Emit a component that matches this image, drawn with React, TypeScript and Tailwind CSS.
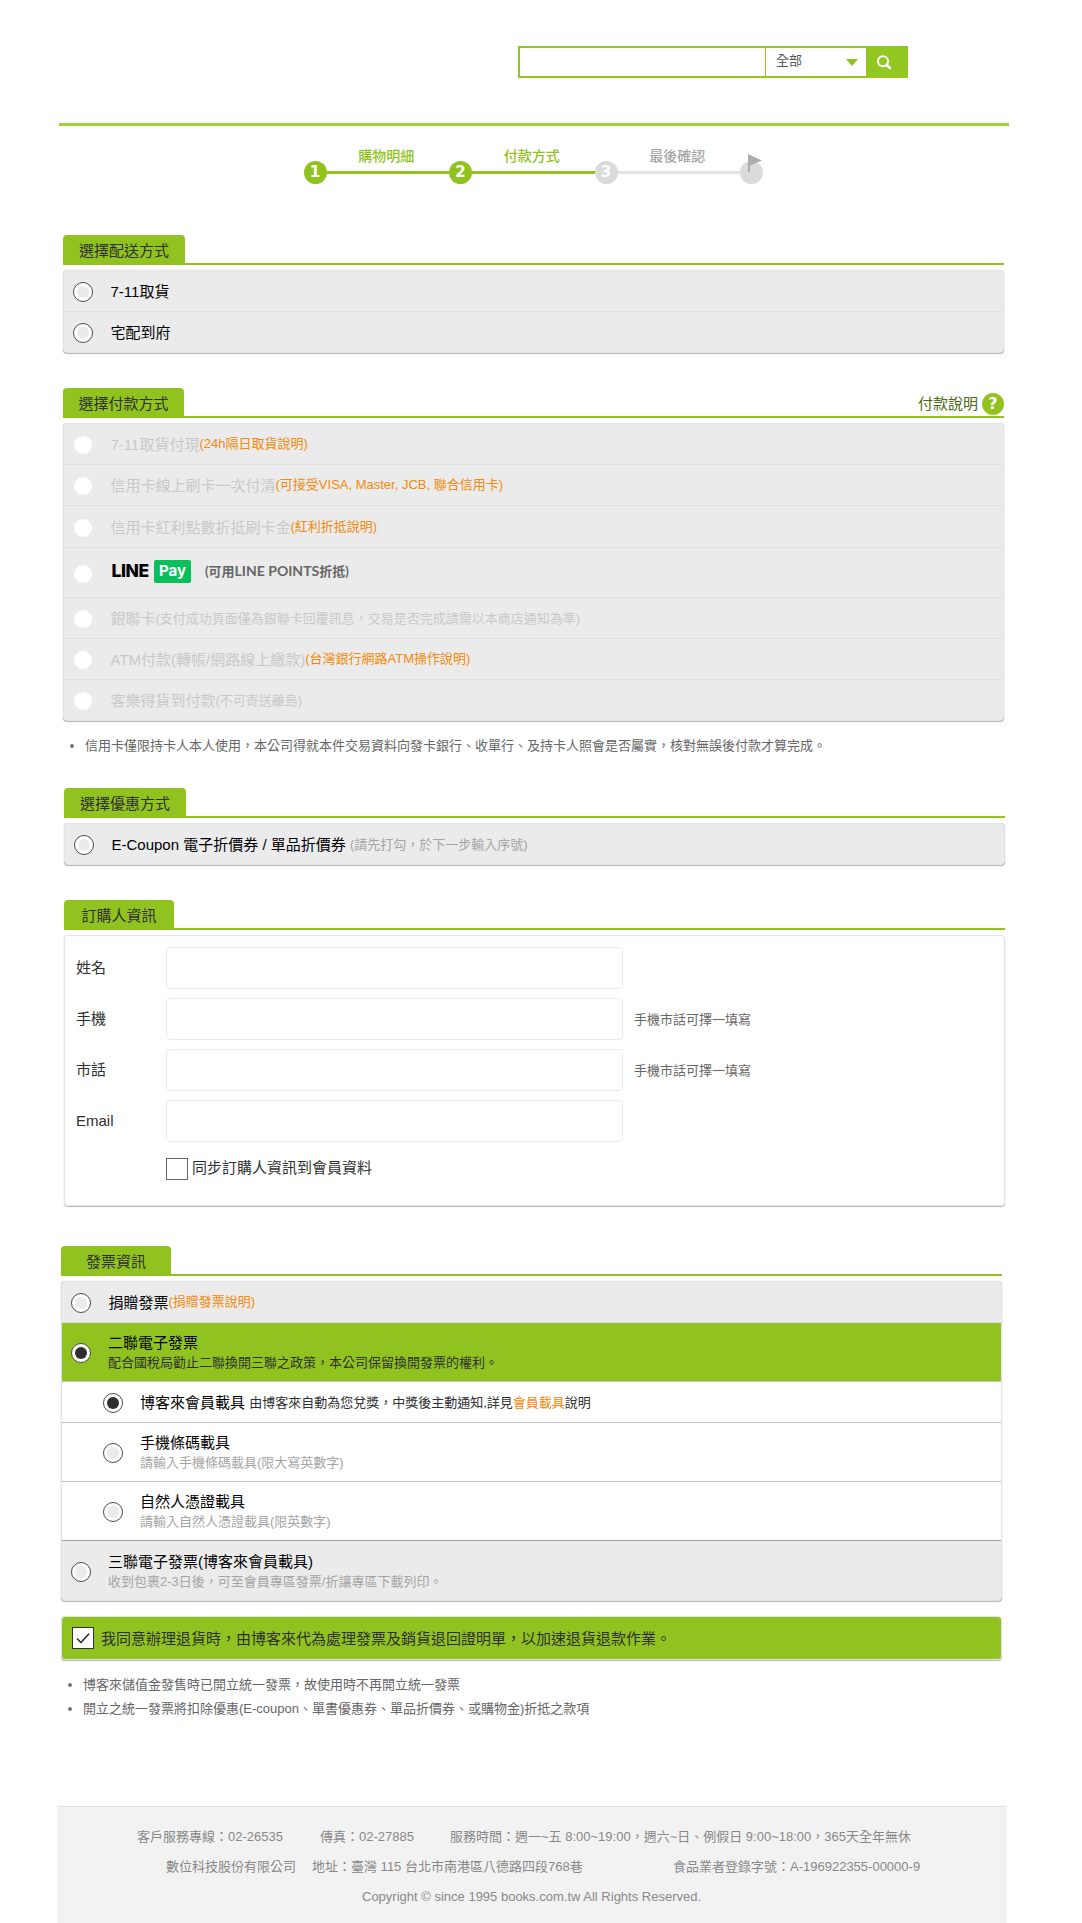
import type { ReactNode } from "react";

const cx = (...parts: (string | false | undefined)[]) => parts.filter(Boolean).join(" ");

function Radio({ state = "off" }: { state?: "off" | "on" | "disabled" }) {
  if (state === "disabled") {
    return <span className="mx-px block size-[18px] shrink-0 rounded-full bg-white" />;
  }
  return (
    <span className="flex size-5 shrink-0 items-center justify-center rounded-full border border-[#4a4a4a] bg-white">
      <span className={cx("block size-3 rounded-full", state === "on" ? "bg-[#2f2f2f]" : "bg-[#ebebeb]")} />
    </span>
  );
}

function TabHeading({ tab, children, aside }: { tab: string; children: ReactNode; aside?: ReactNode }) {
  return (
    <div className="flex h-[30px] items-start justify-between border-b-2 border-[#91c320]">
      <h2
        className={cx(
          "flex h-7 items-center justify-center rounded-t bg-[#91c320] pt-[3px] text-[15px] leading-5 text-[#2f2f2f]",
          tab,
        )}
      >
        {children}
      </h2>
      {aside}
    </div>
  );
}

function Panel({ className, children }: { className?: string; children: ReactNode }) {
  return (
    <div
      className={cx(
        "mt-[5px] overflow-hidden rounded border border-[#e4e4e4] shadow-[0_1px_1px_rgba(0,0,0,0.28),0_0_1px_rgba(0,0,0,0.2)]",
        className,
      )}
    >
      {children}
    </div>
  );
}

function Row({
  className = "h-[41px]",
  state,
  children,
  last,
}: {
  className?: string;
  state?: "off" | "on" | "disabled";
  children: ReactNode;
  last?: boolean;
}) {
  return (
    <div
      className={cx(
        "flex items-center pt-0.5 pl-[9px] text-[15px] leading-5",
        !last && "border-b border-[#e0e0e0]",
        className,
      )}
    >
      <Radio state={state} />
      <div className="ml-[17.5px] flex items-center whitespace-pre">{children}</div>
    </div>
  );
}

function Hint({ children }: { children: ReactNode }) {
  return <span className="relative -top-px text-[13px] text-[#f28a0a]">{children}</span>;
}

function InvoiceRow({
  className,
  state,
  title,
  note,
  noteColor = "text-[#a5a5a5]",
}: {
  className: string;
  state: "off" | "on";
  title: string;
  note: string;
  noteColor?: string;
}) {
  return (
    <div className={cx("flex items-center pt-0.5", className)}>
      <Radio state={state} />
      <div className="ml-[17px]">
        <div className="text-[15px] leading-5 text-black">{title}</div>
        <div className={cx("text-[13px] leading-5", noteColor)}>{note}</div>
      </div>
    </div>
  );
}

function Field({ label, note }: { label: string; note?: string }) {
  return (
    <div className="flex h-[42px] items-center">
      <label className="w-[91px] pt-px pl-px text-[15px] text-[#2f2f2f]">{label}</label>
      <input className="h-[42px] w-[457px] rounded border border-[#ebebeb] bg-white" />
      {note && <span className="ml-[11px] pt-0.5 text-[13px] text-[#666]">{note}</span>}
    </div>
  );
}

function Bullets({ items, className }: { items: string[]; className: string }) {
  return (
    <ul className={cx("text-[13px] leading-6 text-[#666]", className)}>
      {items.map((item) => (
        <li key={item} className="flex items-center whitespace-nowrap">
          <span className="mr-[11px] block size-1 rounded-full bg-[#777]" />
          {item}
        </li>
      ))}
    </ul>
  );
}

function Step({ label, done, n }: { label?: string; done?: boolean; n?: string }) {
  return (
    <>
      <div
        className={cx(
          "relative flex size-[23px] shrink-0 items-center justify-center rounded-full font-['DejaVu_Sans'] text-[15px] font-bold text-white",
          done ? "bg-[#91c320]" : "bg-[#dbdbdb]",
        )}
      >
        {n}
        {!n && (
          <svg className="absolute -top-[7px] left-2 h-[18px] w-[14px]" viewBox="0 0 14 18">
            <path d="M0 0L14 6.5L2 11.5V18H0Z" fill="#adadad" />
          </svg>
        )}
      </div>
      {label && (
        <div className="relative flex w-[122.5px] items-center">
          <div className={cx("h-[3px] w-full", done ? "bg-[#91c320]" : "bg-[#e4e4e4]")} />
          <span
            className={cx(
              "absolute -top-[15px] -left-[1.5px] w-full text-center text-[14px] leading-5 font-medium",
              done ? "text-[#91c320]" : "text-[#a5a5a5]",
            )}
          >
            {label}
          </span>
        </div>
      )}
    </>
  );
}

export default function App() {
  return (
    <div className="flex h-[1923px] w-[1082px] flex-col overflow-hidden bg-white font-['Liberation_Sans','Noto_Sans_CJK_TC',sans-serif] text-[#2f2f2f]">
      <header className="mr-[73px] ml-[59px] h-[126px] shrink-0 border-b-[3px] border-[#9bd42f] pt-[46px] pl-[459px]">
        <div className="flex h-8 w-[390px] border-2 border-[#93c722] bg-[#93c722]">
          <input className="w-[245px] bg-white" />
          <div className="ml-px flex w-[100px] items-center justify-between bg-white pr-2 pl-[10px] text-[13px] text-[#555]">
            <span className="relative -top-px">全部</span>
            <svg className="h-[7px] w-3" viewBox="0 0 12 7">
              <path d="M0 0H12L6 7Z" fill="#91c320" />
            </svg>
          </div>
          <button className="flex flex-1 items-center pl-[10px]" aria-label="搜尋">
            <svg className="h-4 w-4" viewBox="0 0 16 16" fill="none" stroke="white">
              <circle cx="7" cy="7.2" r="5" strokeWidth="2" />
              <path d="M10.8 11L14 14" strokeWidth="2.6" strokeLinecap="round" />
            </svg>
          </button>
        </div>
      </header>

      <div className="mt-[35px] ml-[303.5px] flex h-[23px] shrink-0">
        <Step n="1" label="購物明細" done />
        <Step n="2" label="付款方式" done />
        <Step n="3" label="最後確認" />
        <Step />
      </div>

      <section className="mt-[51px] ml-[63px] w-[941px]">
        <TabHeading tab="w-[122px]">選擇配送方式</TabHeading>
        <Panel className="bg-[#ebebeb] text-black">
          <Row>7-11取貨</Row>
          <Row className="h-10" last>
            宅配到府
          </Row>
        </Panel>
      </section>

      <section className="mt-[35px] ml-[63px] w-[941px]">
        <TabHeading
          tab="w-[121px]"
          aside={
            <a className="mt-[5px] flex items-center text-[15px] leading-5 text-[#4c6a10]">
              付款說明
              <span className="ml-1 flex size-[22px] items-center justify-center rounded-full bg-[#91c320] font-['DejaVu_Sans'] text-[16px] font-bold text-white">
                ?
              </span>
            </a>
          }
        >
          選擇付款方式
        </TabHeading>
        <Panel className="bg-[#ebebeb] text-[#c9c9c9]">
          <Row state="disabled">
            7-11取貨付現<Hint>(24h隔日取貨說明)</Hint>
          </Row>
          <Row state="disabled">
            信用卡線上刷卡一次付清<Hint>(可接受VISA, Master, JCB, 聯合信用卡)</Hint>
          </Row>
          <Row state="disabled" className="h-[42px]">
            信用卡紅利點數折抵刷卡金<Hint>(紅利折抵說明)</Hint>
          </Row>
          <Row state="disabled" className="h-[50px]">
            <span className="-mt-[5px] flex items-center">
              <span className="w-[43.5px] pl-px font-['Inter'] text-[17.5px] font-extrabold tracking-[-0.4px] text-black">
                LINE
              </span>
              <span className="flex h-[23px] w-[37px] items-center justify-center rounded-[2px] bg-[#0abf5b] font-['Inter'] text-[15px] font-bold text-white">
                Pay
              </span>
              <span className="ml-[14px] font-['Lato','Noto_Sans_CJK_TC',sans-serif] text-[13px] font-bold text-[#666]">
                (可用<span className="text-[14px]">LINE POINTS</span>折抵)
              </span>
            </span>
          </Row>
          <Row state="disabled">
            銀聯卡
            <span className="text-[13px]">(支付成功頁面僅為銀聯卡回覆訊息，交易是否完成請需以本商店通知為準)</span>
          </Row>
          <Row state="disabled">
            ATM付款(轉帳/網路線上繳款)<Hint>(台灣銀行網路ATM操作說明)</Hint>
          </Row>
          <Row state="disabled" className="h-10" last>
            客樂得貨到付款<span className="text-[13px]">(不可寄送離島)</span>
          </Row>
        </Panel>
        <Bullets
          className="mt-[13px] pl-[7px]"
          items={["信用卡僅限持卡人本人使用，本公司得就本件交易資料向發卡銀行、收單行、及持卡人照會是否屬實，核對無誤後付款才算完成。"]}
        />
      </section>

      <section className="mt-[30px] ml-16 w-[941px]">
        <TabHeading tab="w-[122px]">選擇優惠方式</TabHeading>
        <Panel className="bg-[#ebebeb] text-black">
          <Row className="h-10" last>
            E-Coupon 電子折價券 / 單品折價券 <span className="text-[13px] text-[#a5a5a5]">(請先打勾，於下一步輸入序號)</span>
          </Row>
        </Panel>
      </section>

      <section className="mt-[35px] ml-16 w-[941px]">
        <TabHeading tab="w-[110px]">訂購人資訊</TabHeading>
        <Panel className="h-[271px] pt-[11px] pl-[10px]">
          <div className="flex flex-col gap-[9px]">
            <Field label="姓名" />
            <Field label="手機" note="手機市話可擇一填寫" />
            <Field label="市話" note="手機市話可擇一填寫" />
            <Field label="Email" />
          </div>
          <label className="mt-4 ml-[91px] flex items-center text-[15px] leading-5">
            <span className="mr-[4px] block size-[22px] border border-[#666] bg-white" />
            <span className="-mt-0.5">同步訂購人資訊到會員資料</span>
          </label>
        </Panel>
      </section>

      <section className="mt-10 ml-[61px] w-[941px]">
        <TabHeading tab="w-[110px]">發票資訊</TabHeading>
        <Panel className="bg-[#ebebeb] text-black">
          <Row>
            捐贈發票<Hint>(捐贈發票說明)</Hint>
          </Row>
          <InvoiceRow
            className="h-[59px] border-b border-[#c4c4c4] bg-[#91c320] pl-[9px]"
            state="on"
            title="二聯電子發票"
            note="配合國稅局勸止二聯換開三聯之政策，本公司保留換開發票的權利。"
            noteColor="text-[#2f2f2f]"
          />
          <div className="flex h-[41px] items-center border-b border-[#c0c0c0] bg-white pt-0.5 pl-[41px] whitespace-pre">
            <Radio state="on" />
            <span className="ml-[17px] text-[15px]">博客來會員載具 </span>
            <span className="text-[13px] text-[#2f2f2f]">
              由博客來自動為您兌獎，中獎後主動通知,詳見<a className="text-[#f28a0a]">會員載具</a>說明
            </span>
          </div>
          <InvoiceRow
            className="h-[59px] border-b border-[#c0c0c0] bg-white pl-[41px]"
            state="off"
            title="手機條碼載具"
            note="請輸入手機條碼載具(限大寫英數字)"
          />
          <InvoiceRow
            className="h-[59px] border-b border-[#a0a0a0] bg-white pl-[41px]"
            state="off"
            title="自然人憑證載具"
            note="請輸入自然人憑證載具(限英數字)"
          />
          <InvoiceRow
            className="h-[59px] pl-[9px]"
            state="off"
            title="三聯電子發票(博客來會員載具)"
            note="收到包裹2-3日後，可至會員專區發票/折讓專區下載列印。"
          />
        </Panel>
        <div className="mt-[15px] flex h-11 items-center rounded border border-[#e4e4e4] bg-[#91c320] pl-[10px] text-[15px] shadow-[0_1px_1px_rgba(0,0,0,0.28)]">
          <span className="mr-[7px] flex size-[22px] items-center justify-center border border-[#333] bg-white">
            <svg className="h-[11px] w-[14px]" viewBox="0 0 14 11" fill="none" stroke="#222" strokeWidth="1.5">
              <path d="M1 5.5L5 9.5L13 0.8" />
            </svg>
          </span>
          <span className="pt-0.5">我同意辦理退貨時，由博客來代為處理發票及銷貨退回證明單，以加速退貨退款作業。</span>
        </div>
        <Bullets
          className="mt-[13px] pl-[7px]"
          items={[
            "博客來儲值金發售時已開立統一發票，故使用時不再開立統一發票",
            "開立之統一發票將扣除優惠(E-coupon、單書優惠券、單品折價券、或購物金)折抵之款項",
          ]}
        />
      </section>

      <footer className="mt-auto ml-[57px] h-[117px] w-[950px] shrink-0 border-t border-[#e2e2e2] bg-[#f2f2f2] pt-[15px] text-[13px] leading-[30px] whitespace-nowrap text-[#888]">
        <div className="flex pl-20">
          <span className="w-[183px]">客戶服務專線：02-26535</span>
          <span className="w-[130px]">傳真：02-27885</span>
          <span>服務時間：週一~五 8:00~19:00，週六~日、例假日 9:00~18:00，365天全年無休</span>
        </div>
        <div className="flex pl-[109px]">
          <span className="w-[146px]">數位科技股份有限公司</span>
          <span className="w-[361px]">地址：臺灣 115 台北市南港區八德路四段768巷</span>
          <span>食品業者登錄字號：A-196922355-00000-9</span>
        </div>
        <div className="pl-[305px]">Copyright © since 1995 books.com.tw All Rights Reserved.</div>
      </footer>
    </div>
  );
}
